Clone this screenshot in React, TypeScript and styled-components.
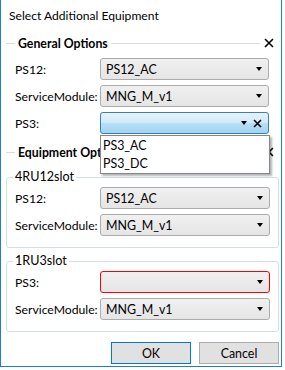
import React from "react";
import styled, { createGlobalStyle } from "styled-components";

const Global = createGlobalStyle`
  html, body { margin: 0; padding: 0; background: #fff; }
  body { font-family: Lato, "Liberation Sans", Arial, sans-serif; font-size: 12px; color: #000; }
  * { box-sizing: border-box; }
`;

const Window = styled.div`
  width: 282px;
  height: 367px;
  background: #fff;
  border: 1px solid #1a7fd6;
  border-top: none;
  display: flex;
  flex-direction: column;
`;

const TitleBar = styled.div`
  height: 31px;
  padding-left: 8px;
  display: flex;
  align-items: center;
  font-size: 12.1px;
`;

const Content = styled.div`
  padding: 0 2px 0 5px;
  display: flex;
  flex-direction: column;
`;

const SectionHeader = styled.div<{ $mt: number }>`
  display: flex;
  align-items: center;
  height: 16px;
  margin-top: ${(p) => p.$mt}px;
`;

const Rule = styled.div<{ $w?: number }>`
  height: 1px;
  background: #dcdcdc;
  ${(p) => (p.$w ? `width: ${p.$w}px;` : "flex: 1;")}
`;

const SectionTitle = styled.span`
  font-weight: bold;
  font-size: 12.3px;
  margin: 0 3px;
  white-space: nowrap;
`;

const CloseBtn = styled.svg`
  width: 10px;
  height: 10px;
  margin: 0 5px 0 4px;
  flex: none;
`;

const Rows = styled.div<{ $mt: number }>`
  display: flex;
  flex-direction: column;
  gap: 5px;
  margin-top: ${(p) => p.$mt}px;
  padding-left: 9px;
`;

const Row = styled.div<{ $sel: number }>`
  display: grid;
  grid-template-columns: 85px ${(p) => p.$sel}px;
  align-items: center;
  height: 22px;
`;

const Label = styled.span`
  font-size: 12.2px;
`;

const SelectWrap = styled.div`
  position: relative;
  height: 22px;
`;

type Variant = "normal" | "focus" | "error";

const SelectBox = styled.div<{ $v: Variant }>`
  height: 22px;
  border-radius: 3px;
  border: 1px solid
    ${(p) => (p.$v === "focus" ? "#3c7fb1" : p.$v === "error" ? "#ff0000" : "#acacac")};
  background: ${(p) =>
    p.$v === "focus"
      ? "linear-gradient(#e4f3fc 0%, #d3ecfa 45%, #b5def5 55%, #a2d4f0 100%)"
      : "linear-gradient(#f0f0f0, #e5e5e5)"};
  display: flex;
  align-items: center;
  padding: 0 6px 0 5px;
  font-size: 12.4px;
`;

const SelectText = styled.span`
  flex: 1;
`;

const Arrow = styled.span`
  width: 0;
  height: 0;
  border-left: 3.5px solid transparent;
  border-right: 3.5px solid transparent;
  border-top: 4px solid #000;
`;

const ClearX = styled.svg`
  width: 9px;
  height: 9px;
  margin-left: 6px;
  margin-right: 0px;
`;

const Popup = styled.div`
  position: absolute;
  left: 0;
  top: 23px;
  width: 170px;
  background: #fff;
  border: 1px solid #828790;
  box-shadow: 2px 2px 2px rgba(0, 0, 0, 0.3);
  padding: 1px 0 0;
  z-index: 2;
`;

const PopupItem = styled.div`
  height: 18px;
  line-height: 18px;
  padding-left: 2px;
  font-size: 12.4px;
`;

const Group = styled.fieldset<{ $mt: number }>`
  margin: ${(p) => p.$mt}px 0 0 0;
  border: 1px solid #d5dfe5;
  border-radius: 3px;
  padding: 2px 7px 11px 0;
  min-width: 0;
`;

const Legend = styled.legend`
  margin-left: 6px;
  padding: 0 2px;
  line-height: 16px;
  font-size: 12.6px;
`;

const GroupRows = styled.div`
  display: flex;
  flex-direction: column;
  gap: 5px;
  padding-left: 8px;
`;

const ButtonBar = styled.div`
  display: flex;
  justify-content: flex-end;
  gap: 8px;
  margin-top: 10px;
`;

const Button = styled.button<{ $default?: boolean }>`
  width: 80px;
  height: 22px;
  margin: 0;
  border: 1px solid ${(p) => (p.$default ? "#0078d7" : "#adadad")};
  background: #e1e1e1;
  font-family: inherit;
  font-size: 12.4px;
  color: #000;
  padding: 0;
`;

const XIcon = ({ as: C, size }: { as: typeof CloseBtn; size: number }) => (
  <C viewBox={`0 0 ${size} ${size}`}>
    <path
      d={`M1 1 L${size - 1} ${size - 1} M${size - 1} 1 L1 ${size - 1}`}
      stroke="#000"
      strokeWidth={1.6}
      fill="none"
    />
  </C>
);

const Select = ({
  value,
  v = "normal",
  clear,
  children,
}: {
  value?: string;
  v?: Variant;
  clear?: boolean;
  children?: React.ReactNode;
}) => (
  <SelectWrap>
    <SelectBox $v={v}>
      <SelectText>{value}</SelectText>
      <Arrow />
      {clear && <XIcon as={ClearX} size={9} />}
    </SelectBox>
    {children}
  </SelectWrap>
);

export default function App() {
  return (
    <>
      <Global />
      <Window>
        <TitleBar>Select Additional Equipment</TitleBar>
        <Content>
          <SectionHeader $mt={4}>
            <Rule $w={9} />
            <SectionTitle>General Options</SectionTitle>
            <Rule />
            <XIcon as={CloseBtn} size={10} />
          </SectionHeader>
          <Rows $mt={7}>
            <Row $sel={169}>
              <Label>PS12:</Label>
              <Select value="PS12_AC" />
            </Row>
            <Row $sel={169}>
              <Label>ServiceModule:</Label>
              <Select value="MNG_M_v1" />
            </Row>
            <Row $sel={169}>
              <Label>PS3:</Label>
              <Select v="focus" clear>
                <Popup>
                  <PopupItem>PS3_AC</PopupItem>
                  <PopupItem>PS3_DC</PopupItem>
                </Popup>
              </Select>
            </Row>
          </Rows>
          <SectionHeader $mt={10}>
            <Rule $w={9} />
            <SectionTitle>Equipment Options</SectionTitle>
            <Rule />
            <XIcon as={CloseBtn} size={10} />
          </SectionHeader>
          <Group $mt={9}>
            <Legend>4RU12slot</Legend>
            <GroupRows>
              <Row $sel={170}>
                <Label>PS12:</Label>
                <Select value="PS12_AC" />
              </Row>
              <Row $sel={170}>
                <Label>ServiceModule:</Label>
                <Select value="MNG_M_v1" />
              </Row>
            </GroupRows>
          </Group>
          <Group $mt={5}>
            <Legend>1RU3slot</Legend>
            <GroupRows>
              <Row $sel={170}>
                <Label>PS3:</Label>
                <Select v="error" />
              </Row>
              <Row $sel={170}>
                <Label>ServiceModule:</Label>
                <Select value="MNG_M_v1" />
              </Row>
            </GroupRows>
          </Group>
          <ButtonBar>
            <Button $default>OK</Button>
            <Button>Cancel</Button>
          </ButtonBar>
        </Content>
      </Window>
    </>
  );
}
